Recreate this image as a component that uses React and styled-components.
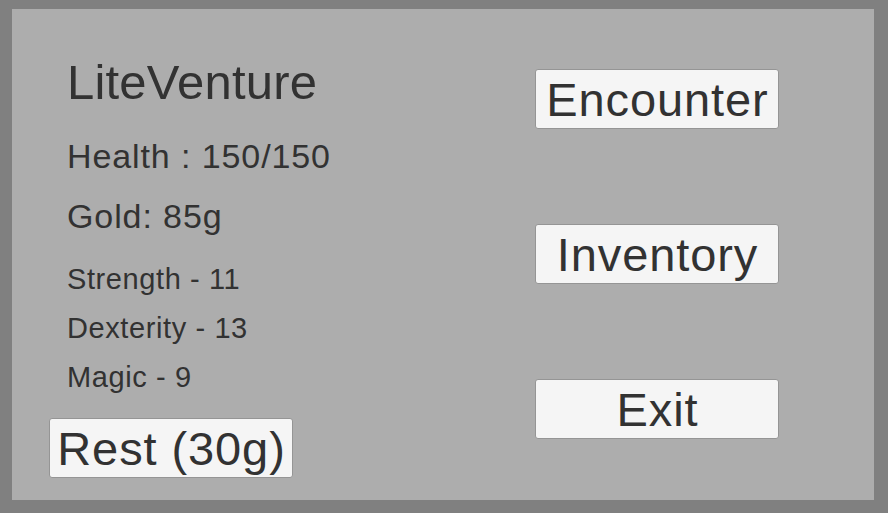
import React from 'react';
import styled, { createGlobalStyle } from 'styled-components';

const GlobalStyle = createGlobalStyle`
  html, body {
    margin: 0;
    padding: 0;
    background-color: #808080;
  }
  body {
    font-family: 'Liberation Sans', Arial, sans-serif;
    color: #323232;
  }
`;

const Screen = styled.div`
  width: 888px;
  height: 513px;
  padding: 9px 14px 13px 12px;
  box-sizing: border-box;
`;

const Panel = styled.div`
  height: 100%;
  background-color: #adadad;
  display: flex;
  padding-left: 37px;
  box-sizing: border-box;
`;

const LeftColumn = styled.div`
  width: 486px;
  display: flex;
  flex-direction: column;
  align-items: flex-start;
  padding-top: 49px;
`;

const RightColumn = styled.div`
  display: flex;
  flex-direction: column;
  gap: 95px;
  padding-top: 60px;
`;

const Title = styled.h1`
  margin: 0 0 0 18px;
  font-size: 49px;
  line-height: 1;
  font-weight: normal;
  letter-spacing: 0.2px;
`;

const Stat = styled.div`
  margin: ${p => p.$gap}px 0 0 18px;
  font-size: ${p => p.$size}px;
  line-height: 1;
  letter-spacing: ${p => p.$spacing}px;
`;

const Button = styled.button`
  width: 244px;
  height: 60px;
  margin-top: ${p => p.$top || 0}px;
  padding: 0 0 0 1px;
  background-color: #f5f5f5;
  border: 1px solid #959595;
  border-radius: 3px;
  font-family: 'Liberation Sans', Arial, sans-serif;
  font-size: 47px;
  line-height: 1;
  letter-spacing: 0.9px;
  color: #323232;
  display: flex;
  align-items: center;
  justify-content: center;
  cursor: pointer;
`;

function App() {
  const stats = [
    { label: 'Health : 150/150', size: 34, gap: 32, spacing: 0.9 },
    { label: 'Gold: 85g', size: 34, gap: 26, spacing: 0.9 },
    { label: 'Strength - 11', size: 29, gap: 32, spacing: 0.6 },
    { label: 'Dexterity - 13', size: 29, gap: 20, spacing: 0.6 },
    { label: 'Magic - 9', size: 29, gap: 20, spacing: 0.6 },
  ];

  return (
    <>
      <GlobalStyle />
      <Screen>
        <Panel>
          <LeftColumn>
            <Title>LiteVenture</Title>
            {stats.map(s => (
              <Stat key={s.label} $size={s.size} $gap={s.gap} $spacing={s.spacing}>
                {s.label}
              </Stat>
            ))}
            <Button $top={26}>Rest (30g)</Button>
          </LeftColumn>
          <RightColumn>
            <Button>Encounter</Button>
            <Button>Inventory</Button>
            <Button>Exit</Button>
          </RightColumn>
        </Panel>
      </Screen>
    </>
  );
}

export default App;
